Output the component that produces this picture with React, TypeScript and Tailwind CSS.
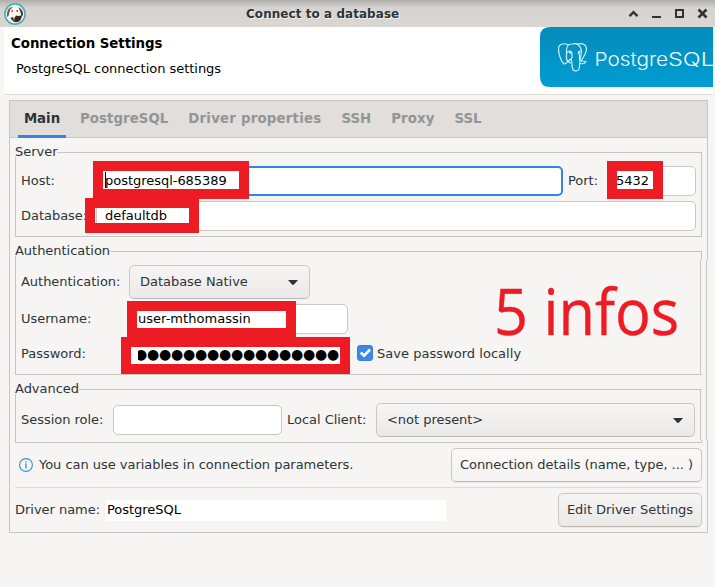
import type { ReactNode } from "react";

const tabs = [
  { label: "PostgreSQL", tracking: "tracking-[0.05px]" },
  { label: "Driver properties", tracking: "tracking-[0.21px]" },
  { label: "SSH", tracking: "tracking-normal" },
  { label: "Proxy", tracking: "tracking-[0.1px]" },
  { label: "SSL", tracking: "tracking-normal" },
];

function Group({ title, className, children }: { title: string; className: string; children: ReactNode }) {
  return (
    <section className={`relative ml-[5px] w-[687px] shrink-0 border border-[#c8c5bf] ${className}`}>
      <h2 className="absolute -top-[9px] -left-px h-[13px] bg-[#f6f5f4] leading-[15px]">{title}</h2>
      {children}
    </section>
  );
}

function Field({ className = "", focused = false }: { className?: string; focused?: boolean }) {
  const border = focused ? "border-2 border-[#3584e4]" : "border border-[#cdc7c2]";
  return <div className={`h-[30px] shrink-0 rounded-[5px] bg-white ${border} ${className}`} />;
}

function Combo({ className, children }: { className: string; children: ReactNode }) {
  return (
    <div className={`flex h-[34px] shrink-0 items-center justify-between rounded-[5px] border border-[#cdc7c2] border-b-[#bfb8b1] bg-linear-to-b from-[#f6f5f4] to-[#ebe9e7] pr-[11px] pl-[10px] ${className}`}>
      <span>{children}</span>
      <svg width="10" height="5" viewBox="0 0 10 5" fill="#2e3436"><path d="M0 0H10L6 4.5Q5 5.4 4 4.5Z" /></svg>
    </div>
  );
}

function Mark({ className, children }: { className: string; children?: ReactNode }) {
  return (
    <div className={`absolute flex items-center overflow-hidden border-10 border-[#ed1c24] bg-white whitespace-nowrap text-black ${className}`}>
      {children}
    </div>
  );
}

function BeaverLogo() {
  return (
    <svg className="shrink-0" width="22" height="22" viewBox="0 0 22 22">
      <circle cx="11" cy="11" r="10.1" fill="#f8f5f1" stroke="#49b2b8" strokeWidth="1.7" />
      <path d="M3 14Q2.5 8 5 5.500Q7 3.500 9 4.500L6.500 6L5.500 9L4.500 13Z" fill="#6b5a53" />
      <path d="M14.500 4Q19.500 7 19 12L17.500 14.500L16.500 9Z" fill="#4b3a34" />
      <path d="M6.500 15L8.500 14L9.500 16.500L12 12.500L14 13L17.500 12.500Q18 17.500 13 19.200Q9 19.500 6.500 15Z" fill="#382621" />
      <path d="M7.500 8.500L8.800 7.500M12.500 7.500L14 8.500" stroke="#382621" strokeWidth="1.1" />
      <path d="M9 14L10.500 16L10 18" stroke="#8a7a72" strokeWidth=".8" fill="none" />
    </svg>
  );
}

function PostgresBanner() {
  return (
    <svg className="shrink-0" width="173" height="60" viewBox="0 0 173 60">
      <defs>
        <linearGradient id="banner" x2="0" y2="1">
          <stop stopColor="#048bb9" />
          <stop offset="1" stopColor="#009dd3" />
        </linearGradient>
      </defs>
      <path d="M173 0H10Q0 0 0 10V50Q0 60 10 60H173Z" fill="url(#banner)" />
      <g fill="none" stroke="#d8f0f8" strokeWidth="1.15" strokeLinejoin="round" strokeLinecap="round">
        <path d="M28.5 18C23 15.5 18.5 17 18.5 22C18.5 27 21 34 23.5 36.5C25 38 26 36 28 34.5" />
        <path d="M28 34.5C24.5 31 27.5 28 26.5 23.5C26.5 19 29 17 32 17C36 16 39.5 18 41 22C42.5 26 40.5 29 40 33" />
        <path d="M37 17.5C42 15 46.5 18 46.5 22C46.5 26 43 31 41 34L46 34.5C45 36.5 42.5 37 40.5 36.5" />
        <path d="M28 34.5L31 32C32.5 34 31.5 38 32.5 41C33 45 38.5 45 39.3 41L40 33" />
        <path d="M27 25.5C29 23.5 32 23.5 32 26.5C31.5 29 33.5 31 31 32C29 33.5 27 35 30.5 36" />
        <path d="M40.5 24C38 24 37.8 26 39.2 27.5C40.5 29 38.5 31 40 33" />
        <path d="M29.5 25.5L31 26M38.5 25L39.5 25.5" strokeWidth="1.5" />
      </g>
      <g fill="#eef9fd" fontFamily="Inter, sans-serif" fontWeight="300" fontSize="18.5">
        <text x="54.5" y="39" textLength="73.5" lengthAdjust="spacingAndGlyphs">Postgre</text>
        <text x="128" y="39" textLength="46" lengthAdjust="spacingAndGlyphs">SQL</text>
      </g>
    </svg>
  );
}

export default function App() {
  return (
    <main className="relative flex h-[587px] w-[715px] flex-col overflow-hidden bg-[#f6f5f4] font-['DejaVu_Sans',sans-serif] text-[13px] leading-[16px] tracking-[-0.03px] text-[#2e3436]">
      <header className="flex h-[27px] shrink-0 items-center bg-linear-to-b from-[#b0afac] via-[#d7d3d0] via-30% to-[#dad6d2] pl-1">
        <BeaverLogo />
        <h1 className="ml-[220px] text-[12px] font-bold tracking-[0.05px] [text-shadow:1px_1px_0_#f2f0ee]">Connect to a database</h1>
        <svg className="ml-auto" width="87" height="27" viewBox="0 0 87 27" fill="none" stroke="#2e3436">
          <path d="M1.5 16.2L5.5 12.2L9.5 16.2" strokeWidth="2.4" />
          <path d="M24 17H33" strokeWidth="2" />
          <rect x="48" y="10" width="7" height="7" strokeWidth="2" />
          <path d="M70.5 9.5L78.5 17.5M78.5 9.5L70.5 17.5" strokeWidth="2.5" />
        </svg>
      </header>
      <div className="ml-1 flex h-[68px] w-[709px] shrink-0 justify-between border-b border-[#dddbd8] bg-white text-black">
        <div className="pt-[9px] pl-[7px]">
          <h2 className="text-[13.333px] font-bold">Connection Settings</h2>
          <p className="mt-[9px] ml-[5px]">PostgreSQL connection settings</p>
        </div>
        <PostgresBanner />
      </div>

      <div className="mt-[5px] ml-[9px] flex h-[433px] w-[699px] shrink-0 flex-col border border-[#c8c5bf]">
        <nav className="flex h-[37px] shrink-0 items-start border-b border-[#cdc7c2] bg-[#e1dedb] pl-2 text-[13.333px] font-bold text-[#929595]">
          <span className="flex h-[37px] w-12 items-start justify-center border-b-3 border-[#3584e4] pt-[10px] text-[#2e3436]">Main</span>
          <div className="ml-[14px] flex gap-5 pt-[10px]">
            {tabs.map((tab) => <span key={tab.label} className={tab.tracking}>{tab.label}</span>)}
          </div>
        </nav>

        <Group title="Server" className="mt-[14px] h-[85px]">
          <div className="mt-[13px] flex h-[30px] items-center pl-[5px]">
            <span className="w-[75px]">Host:</span>
            <Field className="w-[467px]" focused />
            <span className="ml-[5px] w-[44px]">Port:</span>
            <Field className="w-[84px]" />
          </div>
          <div className="mt-[5px] flex h-[30px] items-center pl-[5px]">
            <span className="w-[75px]">Database:</span>
            <Field className="w-[600px]" />
          </div>
        </Group>

        <Group title="Authentication" className="mt-[14px] h-[124px]">
          <i className="absolute top-[8px] -right-px h-[114px] w-[2px] border-l border-[#c8c5bf] bg-[#f6f5f4]" />
          <div className="mt-[13px] flex h-[34px] items-center pl-[5px]">
            <span className="w-[108px]">Authentication:</span>
            <Combo className="w-[181px]">Database Native</Combo>
          </div>
          <div className="mt-[5px] flex h-[30px] items-center pl-[5px]">
            <span className="w-[108px]">Username:</span>
            <Field className="w-[219px]" />
          </div>
          <div className="mt-[4px] flex h-[30px] items-center pl-[5px]">
            <span className="w-[108px] pt-px">Password:</span>
            <Field className="w-[219px]" />
            <svg className="ml-[9px]" width="16" height="16" viewBox="0 0 16 16">
              <rect x=".5" y=".5" width="15" height="15" rx="2.5" fill="#3c88e7" stroke="#3580df" />
              <path d="M3.7 7.6L7 10.7L13 4.5" fill="none" stroke="white" strokeWidth="2.7" />
            </svg>
            <span className="ml-[4px] pt-px tracking-[0.03px]">Save password locally</span>
          </div>
        </Group>

        <Group title="Advanced" className="mt-[14px] h-[54px]">
          <i className="absolute top-0 -right-px h-[50px] w-[2px] border-l border-[#c8c5bf] bg-[#f6f5f4]" />
          <div className="mt-[13px] flex h-[34px] items-center pl-[5px]">
            <span className="w-[92px]">Session role:</span>
            <Field className="w-[169px]" />
            <span className="ml-[5px] w-[89px]">Local Client:</span>
            <Combo className="w-[319px]">&lt;not present&gt;</Combo>
          </div>
        </Group>

        <div className="mt-[5px] ml-[5px] flex h-[34px] w-[687px] shrink-0 items-center">
          <svg className="ml-[4px]" width="14" height="14" viewBox="0 0 14 14" fill="none" stroke="#368fd0">
            <circle cx="7" cy="7" r="6.4" strokeWidth="1.1" />
            <path d="M7 5.5V10.5M7 3.2V4.4" strokeWidth="1.3" />
          </svg>
          <span className="ml-[6px]">You can use variables in connection parameters.</span>
          <button className="ml-auto h-[34px] w-[251px] rounded-[5px] border border-[#cdc7c2] border-b-[#bfb8b1] bg-linear-to-b from-[#faf9f8] to-[#f5f3f2] whitespace-nowrap shadow-[0_1px_1px_#0000000d]">Connection details (name, type, ... )</button>
        </div>
        <div className="mt-[5px] ml-[5px] h-px w-[687px] shrink-0 bg-[#dddbd8]" />
        <div className="mt-[5px] ml-[5px] flex h-[34px] w-[687px] shrink-0 items-center">
          <span className="w-[90px]">Driver name:</span>
          <span className="h-[21px] w-[341px] bg-white pl-[2px] leading-[20px] text-black">PostgreSQL</span>
          <button className="ml-auto h-[34px] w-[144px] rounded-[5px] border border-[#cdc7c2] border-b-[#bfb8b1] bg-linear-to-b from-[#f6f5f4] to-[#ebe9e7] whitespace-nowrap shadow-[0_1px_1px_#0000000d]">Edit Driver Settings</button>
        </div>
      </div>

      <i className="absolute top-[260px] left-[706px] h-[180px] w-[2px] border-l border-[#c8c5bf] bg-[#f6f5f4]" />
      <Mark className="top-[161px] left-[93px] h-[38px] w-[156px] pl-[2px]">
        <i className="h-4 w-px bg-black" />
        <span className="-ml-px pt-px">postgresql-685389</span>
      </Mark>
      <Mark className="top-[161px] left-[607px] h-[38px] w-[56px]"><span className="-ml-px pt-px">5432</span></Mark>
      <Mark className="top-[198px] left-[85px] h-[35px] w-[114px]">
        <i className="ml-px h-full w-px bg-[#cdc7c2]" />
        <span className="ml-[8px]">defaultdb</span>
      </Mark>
      <Mark className="top-[301px] left-[127px] h-[37px] w-[169px]"><span className="ml-px pb-px tracking-[0.03px]">user-mthomassin</span></Mark>
      <Mark className="top-[337px] left-[121px] h-[37px] w-[229px]">
        <div className="ml-[4px] flex pb-[3px] text-[14px] tracking-normal [clip-path:inset(0_0_0_3px)]">
          {Array.from({ length: 17 }, (_, i) => <span key={i} className="flex w-3 justify-center">●</span>)}
        </div>
      </Mark>
      <p className="absolute top-[269px] left-[494px] origin-left scale-x-93 font-['Open_Sans','Noto_Sans',sans-serif] text-[64px] leading-[84px] tracking-normal whitespace-nowrap text-[#ed1c24] [-webkit-text-stroke:0.4px_#ed1c24]">5 infos</p>
    </main>
  );
}
